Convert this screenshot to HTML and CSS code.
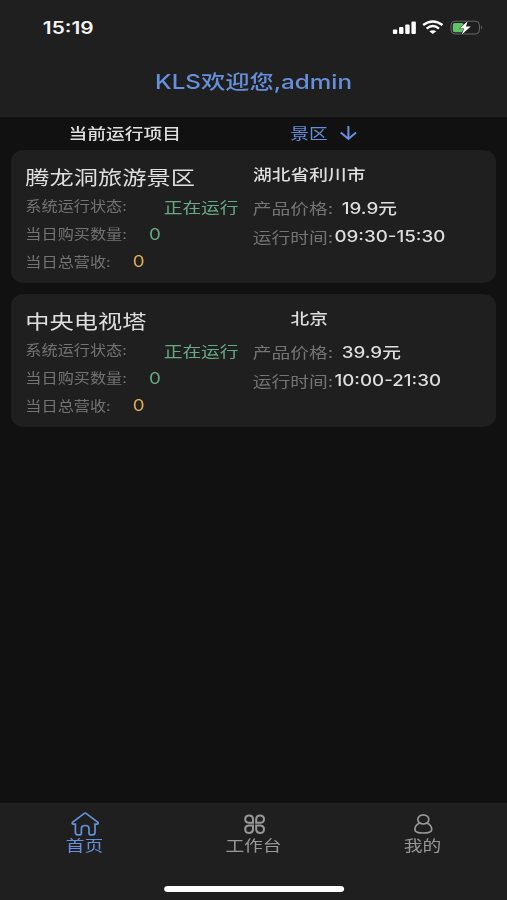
FILE: index.html
```html
<!DOCTYPE html>
<html lang="zh-CN">
<head>
    <meta charset="UTF-8">
    <meta name="viewport" content="width=device-width, initial-scale=1.0">
    <title>KLS</title>
    <link rel="stylesheet" href="styles.css">
</head>
<body>
    <div class="app">
        <header class="header">
            <div class="status-bar">
                <span class="clock">15:19</span>
                <svg class="status-icons" viewBox="0 0 92 16" preserveAspectRatio="none">
                    <g fill="#fff">
                        <rect x="1" y="9.5" width="4.4" height="4.5" rx="1"/>
                        <rect x="7.2" y="7" width="4.4" height="7" rx="1"/>
                        <rect x="13.4" y="4.5" width="4.4" height="9.5" rx="1"/>
                        <rect x="19.6" y="1.5" width="4.4" height="12.5" rx="1"/>
                        <path d="M41 14l-3.5-2.7q3.5-2.3 7 0z"/>
                    </g>
                    <g fill="none" stroke="#fff" stroke-width="2.4">
                        <path d="M31.3 5Q41-2.2 50.7 5"/>
                        <path d="M34.8 8.6Q41 3.6 47.2 8.6"/>
                    </g>
                    <rect x="59.2" y="1.2" width="28.5" height="12.8" rx="4" fill="none" stroke="#686868"/>
                    <path d="M89.3 5.5q2.4 2 0 4z" fill="#686868"/>
                    <rect x="61" y="3" width="11" height="9.2" rx="2" fill="#5fc466"/>
                    <path d="M76 1l-8 7.5h4.3L70 14.5l9-8h-4.8z" fill="#fff" stroke="#1f1f1f" stroke-width="1" paint-order="stroke"/>
                </svg>
            </div>
            <h1 class="title">KLS欢迎您,admin</h1>
        </header>

        <main class="content">
            <div class="filter">
                <span class="filter-title">当前运行项目</span>
                <span class="filter-type">景区</span>
                <svg class="arrow" viewBox="0 0 18 16" preserveAspectRatio="none">
                    <path d="M9 1v13M1.5 7.5L9 14l7.5-6.5"/>
                </svg>
            </div>

            <section class="card">
                <div class="card-left">
                    <h2 class="name">腾龙洞旅游景区</h2>
                    <p class="row"><span class="label">系统运行状态:</span><span class="state">正在运行</span></p>
                    <p class="row"><span class="label">当日购买数量:</span><span class="num green">0</span></p>
                    <p class="row"><span class="label">当日总营收:</span><span class="num orange">0</span></p>
                </div>
                <div class="card-right">
                    <p class="address">湖北省利川市</p>
                    <p class="info"><span class="info-label">产品价格:</span><span class="price">19.9元</span></p>
                    <p class="info"><span class="info-label">运行时间:</span><span class="time">09:30-15:30</span></p>
                </div>
            </section>

            <section class="card">
                <div class="card-left">
                    <h2 class="name">中央电视塔</h2>
                    <p class="row"><span class="label">系统运行状态:</span><span class="state">正在运行</span></p>
                    <p class="row"><span class="label">当日购买数量:</span><span class="num green">0</span></p>
                    <p class="row"><span class="label">当日总营收:</span><span class="num orange">0</span></p>
                </div>
                <div class="card-right">
                    <p class="address">北京</p>
                    <p class="info"><span class="info-label">产品价格:</span><span class="price">39.9元</span></p>
                    <p class="info"><span class="info-label">运行时间:</span><span class="time">10:00-21:30</span></p>
                </div>
            </section>
        </main>

        <footer class="tab-bar">
            <nav class="tabs">
                <a class="tab active">
                    <svg class="tab-icon" viewBox="0 0 30 26" preserveAspectRatio="none">
                        <path d="M14.2 2.6Q15.4 1.7 16.6 2.6L28.1 11.4Q29.1 12.8 27.4 13.2H25.2V21.5Q25.2 23.8 22.8 23.8H20.7Q19.2 23.8 19.2 22V17.5Q19.2 14.5 15.4 14.5T11.6 17.5V22Q11.6 23.8 10.1 23.8H8Q5.6 23.8 5.6 21.5V13.2H3.4Q1.7 12.8 2.7 11.4Z"/>
                    </svg>
                    <span>首页</span>
                </a>
                <a class="tab">
                    <svg class="tab-icon work" viewBox="0 0 30 26" preserveAspectRatio="none">
                        <path d="M14.2 11.8H9.8A3.9 3.7 0 1 1 14.2 7.8Z"/>
                        <path d="M17.4 11.8H21.8A3.9 3.7 0 1 0 17.4 7.8Z"/>
                        <path d="M14.2 14.6H9.8A3.9 3.7 0 1 0 14.2 18.6Z"/>
                        <path d="M17.4 14.6H21.8A3.9 3.7 0 1 1 17.4 18.6Z"/>
                    </svg>
                    <span>工作台</span>
                </a>
                <a class="tab">
                    <svg class="tab-icon" viewBox="0 0 30 26" preserveAspectRatio="none">
                        <ellipse cx="15.5" cy="8.4" rx="5.5" ry="4.6"/>
                        <path d="M12 12C8.5 13.5 7.1 16.5 7.1 18.4C7.1 23.2 23.9 23.2 23.9 18.4C23.9 16.5 22.5 13.5 19 12"/>
                    </svg>
                    <span>我的</span>
                </a>
            </nav>
            <div class="home-line"></div>
        </footer>
    </div>
</body>
</html>
```
FILE: styles.css
```css
:root {
    --panel: #1f1f1f;
    --page: #111111;
    --blue: #6790dc;
    --green: #69aa86;
    --orange: #dfad55;
    --gray: #747474;
    --text: #dedede;
}

* {
    margin: 0;
    padding: 0;
    box-sizing: border-box;
}

body {
    background-color: var(--page);
    height: 900px;
    overflow: hidden;
    font-family: Inter, 'Noto Sans CJK SC', sans-serif;
    color: var(--text);
}

/* 414pt wide layout stretched over the window */
.app {
    width: 414px;
    height: 900px;
    display: flex;
    flex-direction: column;
    transform: scaleX(1.22464);
    transform-origin: 0 0;
}

.header {
    height: 117px;
    background-color: var(--panel);
}

.status-bar {
    display: flex;
    justify-content: space-between;
    align-items: center;
    height: 55px;
    padding: 0 19px 0 35px;
}

.clock {
    font-size: 17px;
    font-weight: 600;
    color: #f4f4f4;
}

.status-icons {
    width: 75px;
    height: 16px;
}

.title {
    font-size: 19.8px;
    font-weight: 500;
    line-height: 54px;
    text-align: center;
    color: var(--blue);
}

.content {
    flex: 1;
    padding: 0 9px;
}

.filter {
    display: flex;
    align-items: center;
    height: 33px;
    padding: 0 0 3px 47px;
    font-size: 15.3px;
    font-weight: 500;
}

.filter-title {
    width: 181px;
}

.filter-type {
    color: var(--blue);
    font-weight: 400;
}

.arrow {
    width: 15px;
    height: 16px;
    margin: 2px 0 0 9.5px;
    fill: none;
    stroke: var(--blue);
    stroke-width: 2;
}

.card {
    display: flex;
    height: 133px;
    margin-bottom: 11px;
    padding-left: 11.7px;
    border-radius: 11px;
    background-color: var(--panel);
}

.card-left {
    width: 185.8px;
    padding-top: 14px;
}

.name {
    font-size: 19.8px;
    font-weight: 400;
    line-height: 28px;
}

.row {
    display: flex;
    align-items: center;
    height: 27.7px;
}

.label {
    font-size: 13.2px;
    color: var(--gray);
}

.state {
    margin: 1px 0 0 30px;
    font-size: 15.3px;
    color: var(--green);
}

.num {
    margin: 1px 0 0 18px;
    font-size: 15.3px;
}

.green {
    color: var(--green);
}

.orange {
    color: var(--orange);
}

.card-right {
    padding-top: 8px;
    font-size: 15.3px;
}

.address {
    width: 92px;
    font-weight: 500;
    line-height: 34px;
    text-align: center;
    white-space: nowrap;
}

.info {
    display: flex;
    align-items: center;
    height: 29.5px;
}

.info-label {
    color: var(--gray);
}

.price,
.time {
    font-weight: 500;
}

.price {
    margin-left: 7px;
}

.time {
    margin: 1px 0 0 1px;
}

.tab-bar {
    height: 97px;
    background-color: var(--panel);
}

.tabs {
    display: flex;
    height: 83px;
    padding-top: 8px;
}

.tab {
    flex: 1;
    display: flex;
    flex-direction: column;
    align-items: center;
    font-size: 15.3px;
    line-height: 18px;
    color: #989898;
}

.tab.active {
    color: var(--blue);
}

.tab-icon {
    width: 24.5px;
    height: 26px;
    fill: none;
    stroke: currentColor;
    stroke-width: 1.7;
}

.tab-icon.work {
    stroke-width: 2;
}

.home-line {
    width: 147px;
    height: 6px;
    margin: 0 auto;
    border-radius: 3px;
    background-color: #fff;
}
```
